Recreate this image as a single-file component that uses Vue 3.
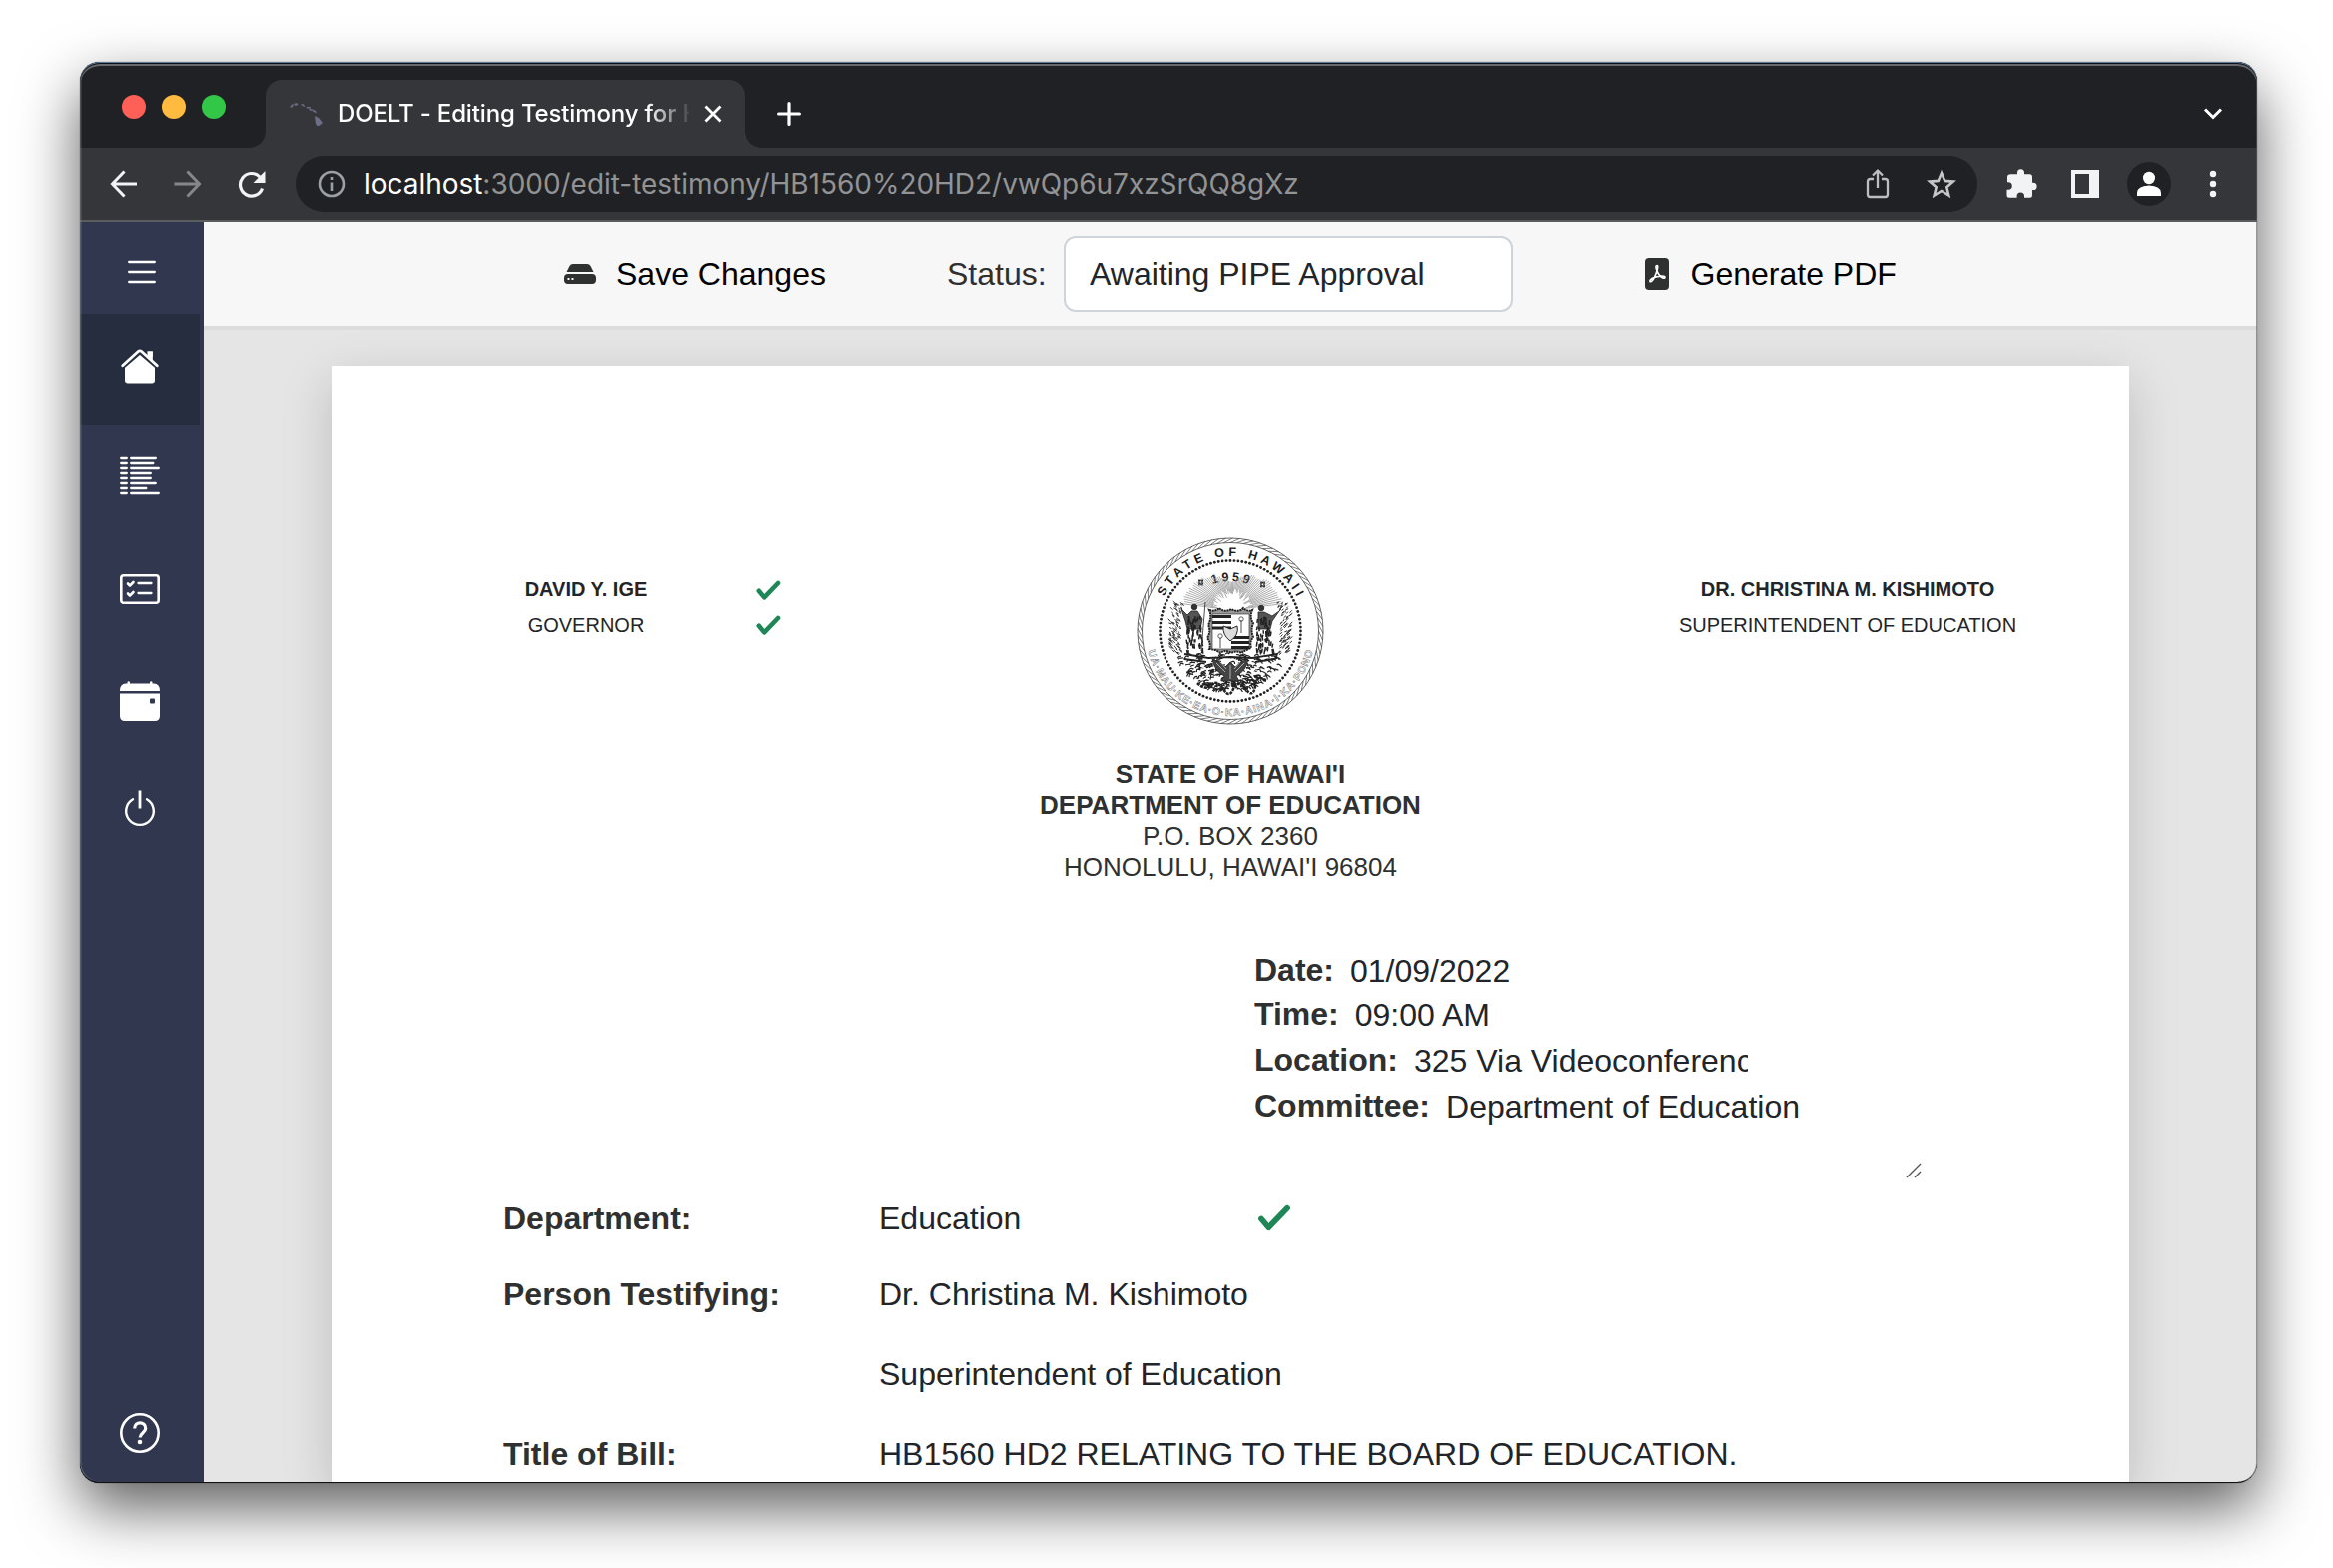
<script setup>
// Small deterministic generator so the engraved texture is always the same
let seed = 7
const rnd = () => {
  seed = (seed * 16807) % 2147483647
  return seed / 2147483647
}
const f = (n) => n.toFixed(1)

const beads = Array.from({ length: 112 }, (_, i) => {
  const a = (i / 112) * Math.PI * 2
  return { x: Math.cos(a) * 70.5, y: Math.sin(a) * 70.5 }
})

let rope = ''
for (let i = 0; i < 84; i++) {
  const a = (i / 84) * Math.PI * 2
  const b = a + 0.1
  rope += `M${f(Math.cos(a) * 88.6)} ${f(Math.sin(a) * 88.6)}L${f(Math.cos(b) * 93)} ${f(Math.sin(b) * 93)}`
}

let rays = ''
for (let i = 0; i < 60; i++) {
  const a = Math.PI * (1.04 + (i / 59) * 0.92)
  const r1 = 13 + rnd() * 9
  const r2 = 26 + Math.abs(Math.cos(a)) * 22 + rnd() * 4
  rays += `M${f(2 + Math.cos(a) * r1)} ${f(-21 + Math.sin(a) * r1)}L${f(2 + Math.cos(a) * r2)} ${f(-21 + Math.sin(a) * r2)}`
}

let leaves = ''
for (let i = 0; i < 210; i++) {
  const side = i % 2 ? 1 : -1
  const y = -28 + rnd() * 52
  const x = side * (49 + rnd() * 11 - Math.max(0, Math.abs(y) - 18) * 0.4)
  leaves += `M${f(x)} ${f(y)}l${f(side * (1 + rnd() * 2))} ${f(-1 - rnd() * 2)}`
}

let scroll = ''
for (let i = 0; i < 250; i++) {
  const y = 23 + rnd() * 36
  const half = Math.sqrt(62 * 62 - y * y) - 5
  const x = (rnd() * 2 - 1) * half
  const s = x < 0 ? -1 : 1
  scroll += `M${f(x)} ${f(y)}q${f(s * (1 + rnd() * 4))} ${f(-3 * rnd())} ${f(s * (3 + rnd() * 3))} ${f(3 * rnd())}`
}

let robes = ''
for (let i = 0; i < 120; i++) {
  const y = -16 + rnd() * 36
  const w = 6 + (y + 16) * 0.08
  const left = i % 2
  const x = (left ? -36 : 34 + y * 0.06) + (rnd() * 2 - 1) * w
  robes += `M${f(x)} ${f(y)}l${f(rnd() * 2 - 1)} ${f(3 + rnd() * 3)}`
}

const address = [
  { text: "STATE OF HAWAI'I", bold: true },
  { text: 'DEPARTMENT OF EDUCATION', bold: true },
  { text: 'P.O. BOX 2360' },
  { text: "HONOLULU, HAWAI'I 96804" },
]
const hearing = [
  { label: 'Date:', value: '01/09/2022', h: 44 },
  { label: 'Time:', value: '09:00 AM', h: 46 },
  { label: 'Location:', value: '325 Via Videoconference', h: 46, clip: true },
  { label: 'Committee:', value: 'Department of Education', h: 46 },
]
const codeRows = [37, 34.5, 40, 32, 32, 37, 27.5, 40]
</script>

<template>
  <div class="desktop">
    <div class="window">
      <header class="tabs">
        <div class="lights"><i class="red"></i><i class="amber"></i><i class="green"></i></div>
        <div class="tab">
          <svg class="fav" width="34" height="24" viewBox="0 0 34 24" fill="#6b6e86">
            <path d="M0 5l3-3 1 1-2 3zM4 2l3-1 1.500 2-3 1zM11 2l3 .5 1.500 2.500-3-1zM16.500 5l4.500 0 0 1.500-4 0zM19 7l2.500 0 1 2-2.500-.5zM22 7l4 2 1 2.500-4-2zM25 14l4 2 4 5-5 4-2-3z" />
          </svg>
          <span class="tab-title">DOELT - Editing Testimony for HB1560</span>
          <svg class="close" width="18" height="18" viewBox="0 0 18 18" stroke="#fff" stroke-width="2.800"><path d="M1.500 1.500l15 15M16.500 1.500l-15 15" /></svg>
        </div>
        <svg class="plus" width="24" height="24" viewBox="0 0 24 24" stroke="#fff" stroke-width="3.200" stroke-linecap="round"><path d="M12 1.600v20.800M1.600 12h20.800" /></svg>
        <svg class="chev" width="20" height="14" viewBox="0 0 20 14" fill="none" stroke="#fff" stroke-width="3"><path d="M2 2.500l8 8 8-8" /></svg>
      </header>

      <div class="toolbar">
        <svg class="nav" width="170" height="36" viewBox="0 0 170 36" fill="none" stroke-width="3">
          <g stroke="#f1f3f4"><path d="M27 18H3M14.500 5.500L2.500 18l12 12.500" /></g>
          <g stroke="#868789"><path d="M64.500 18H89M77.500 5.500L89.500 18l-12 12.500" /></g>
          <path stroke="#f1f3f4" stroke-width="3.200" d="M152.500 22.500a11.300 11.300 0 1 1-2.500-11.500" />
          <path fill="#f1f3f4" d="M155.500 5v12h-12z" />
        </svg>
        <div class="omnibox">
          <svg width="28" height="28" viewBox="0 0 28 28" fill="none" stroke="#9aa0a6" stroke-width="2.600"><circle cx="14" cy="14" r="12" /><path d="M14 12.500v8.500M14 7v3" /></svg>
          <span class="url"><b>localhost</b>:3000/edit-testimony/HB1560%20HD2/vwQp6u7xzSrQQ8gXz</span>
          <svg class="share" width="24" height="32" viewBox="0 0 24 32" fill="none" stroke="#bdbec0" stroke-width="2.300" stroke-linejoin="round"><path d="M8 11H4.500q-2.500 0-2.500 2.500v13q0 2.500 2.500 2.500h15q2.500 0 2.500-2.500v-13q0-2.500-2.500-2.500H16M12 20V3M7 7.500l5-5 5 5" /></svg>
          <svg class="star" width="30" height="30" viewBox="0 0 30 30" fill="none" stroke="#c5c6c8" stroke-width="2.600"><path d="M15 4l3.300 7.900 8.500.7-6.500 5.600 2 8.300L15 22l-7.300 4.500 2-8.300-6.500-5.600 8.500-.7z" /></svg>
        </div>
        <svg class="ext" width="230" height="48" viewBox="0 0 230 48" fill="#f1f3f4">
          <path d="M12 15h6.500v-1.500a3.500 3.500 0 0 1 7 0V15H31q2.500 0 2.500 2.500v6h1a3.600 3.600 0 0 1 0 7.200h-1V36q0 2.500-2.500 2.500h-5.500V37a3.700 3.700 0 0 0-7.400 0v1.500H10.500Q8 38.500 8 36v-5.500h1.500a3.700 3.700 0 0 0 0-7.500H8.500v-5.500Q8.500 15 12 15z" transform="translate(-.5 -.7)" />
          <path fill-rule="evenodd" d="M72 10h28v28H72zM76 14h14v20H76z" />
          <circle cx="150" cy="24" r="22" fill="#202124" />
          <ellipse cx="150" cy="18" rx="6" ry="6.200" fill="#fff" /><path fill="#fff" d="M138 36v-3q0-7 12-7.500 12 .5 12 7.500v3z" />
          <circle cx="214" cy="14" r="3.200" /><circle cx="214" cy="24" r="3.200" /><circle cx="214" cy="34" r="3.200" />
        </svg>
      </div>

      <div class="body">
        <nav class="side">
          <div class="burger">
            <svg width="28" height="24" viewBox="0 0 28 24" stroke="#fff" stroke-width="2.300" stroke-linecap="round"><path d="M1.200 2h25.600M1.200 12h25.600M1.200 22h25.600" /></svg>
          </div>
          <div class="item active">
            <svg width="40" height="40" viewBox="0 0 40 40" fill="#fff">
              <path d="M27.500 5.500h5.300v11l-5.300-5z" />
              <path d="M5 20L20 8l15 12V34.500q0 3-3 3H8q-3 0-3-3z" />
              <path d="M2 20L18.300 6q1.700-1.300 3.400 0L38 20" fill="none" stroke="#252d3f" stroke-width="6.800" />
              <path d="M27.500 5.500h5.300v9l-5.300-5z" />
              <path d="M2.700 19.800L18.300 5.500q1.700-1.300 3.400 0L37.300 19.800" fill="none" stroke="#fff" stroke-width="2.800" stroke-linecap="round" />
            </svg>
          </div>
          <div class="item">
            <svg width="40" height="40" viewBox="0 0 40 40" stroke="#fff" stroke-width="2.300" stroke-linecap="round">
              <path v-for="(w, i) in codeRows" :key="i" :d="`M1.200 ${2 + i * 5}h5.600M11.200 ${2 + i * 5}H${w - 1.200}`" />
            </svg>
          </div>
          <div class="item">
            <svg width="40" height="40" viewBox="0 0 40 40" fill="none" stroke="#fff" stroke-width="2.600" stroke-linecap="round" stroke-linejoin="round">
              <rect x="1.300" y="6.300" width="37.400" height="27.400" rx="2.500" />
              <path d="M18.500 14h13M18.500 24h13" stroke-width="2.300" /><path d="M8 14.500l2 2 3.500-3.500M8 24.500l2 2 3.500-3.500" />
            </svg>
          </div>
          <div class="item">
            <svg width="40" height="40" viewBox="0 0 40 40" fill="#fff">
              <path d="M0 10Q0 2.500 6 2.500h1.500V1Q8.700-.5 10 1v1.500h20V1q1.200-1.500 2.500 0v1.500H34q6 0 6 7.500zM0 12.500h40V35q0 5-5 5H5q-5 0-5-5z" />
              <rect x="30" y="17.500" width="5" height="5" rx="1" fill="#30374f" />
            </svg>
          </div>
          <div class="item">
            <svg width="40" height="40" viewBox="0 0 40 40" fill="none" stroke="#fff" stroke-width="2.400" stroke-linecap="round"><path d="M20 2.500V20.500" stroke-width="2.800" stroke-linecap="butt" /><path d="M13 11.200a13.800 13.800 0 1 0 14 0" /></svg>
          </div>
          <div class="help">
            <svg width="40" height="40" viewBox="0 0 40 40" fill="none" stroke="#fff" stroke-width="2.600"><circle cx="20" cy="20" r="18.700" /><path d="M14.700 15.500c0-7.500 11-7.500 11 0 0 4-5.500 4.500-5.500 9" stroke-width="3.200" /><circle cx="20" cy="29" r="2.300" fill="#fff" stroke="none" /></svg>
          </div>
        </nav>

        <main class="main">
          <div class="actions">
            <div class="action save">
              <svg width="32" height="20" viewBox="0 0 32 20" fill="#2f3030"><path d="M5.500 2Q6.500 0 9 0h14q2.500 0 3.500 2l3 6h-27z" /><path fill-rule="evenodd" d="M4 10h24q4 0 4 4v2q0 4-4 4H4q-4 0-4-4v-2q0-4 4-4zM3.500 14v2h2v-2zM7.500 14v2h2v-2z" /></svg>
              <span>Save Changes</span>
            </div>
            <span class="status">Status:</span>
            <div class="select">Awaiting PIPE Approval</div>
            <div class="action pdf">
              <svg width="24" height="32" viewBox="0 0 24 32"><rect width="24" height="32" rx="4" fill="#2f3030" /><path d="M12 7.500c-2.500 0 0 6 1.500 8.500 2 3.500 6 5.500 6.500 3.500.500-2-8-2-13 1-3.500 2.500-2 4.500 0 2.500 3-3 7.500-15.500 5-15.500z" fill="none" stroke="#fff" stroke-width="1.600" /></svg>
              <span>Generate PDF</span>
            </div>
          </div>

          <article class="paper">
            <section class="head">
              <div class="official gov"><b>DAVID Y. IGE</b><span>GOVERNOR</span></div>
              <div class="checks">
                <svg v-for="n in 2" :key="n" width="25" height="21" viewBox="0 0 25 21" fill="none" stroke="#1f8656" stroke-width="4.600" stroke-linecap="round" stroke-linejoin="round"><path d="M2.800 10.800l5.400 6.600L22 3" /></svg>
              </div>
              <svg class="seal" width="188" height="188" viewBox="-94 -94 188 188" fill="none" stroke="#222">
                <defs>
                  <path id="arc-name" d="M-75 0A75 75 0 0 1 75 0" />
                  <path id="arc-year" d="M-50 0A50 50 0 0 1 50 0" />
                  <path id="arc-motto" d="M-85 0A85 85 0 0 0 85 0" />
                </defs>
                <circle r="93" stroke-width=".7" /><circle r="88.500" stroke-width=".7" />
                <path :d="rope" stroke-width=".7" stroke="#444" />
                <circle v-for="(b, i) in beads" :key="i" :cx="b.x" :cy="b.y" r="1.400" fill="#222" stroke="none" />
                <g font-family="Liberation Sans, Arial, sans-serif" text-anchor="middle">
                  <text font-size="12.500" font-weight="700" fill="#1c1c1c" stroke="none" textLength="164"><textPath href="#arc-name" startOffset="50%" textLength="164">STATE OF HAWAII</textPath></text>
                  <text font-size="12.500" font-weight="700" fill="#1c1c1c" stroke="none" letter-spacing="3"><textPath href="#arc-year" startOffset="51%">1959</textPath></text>
                  <text font-size="10.500" font-weight="700" fill="none" stroke="#777" stroke-width=".5" textLength="226"><textPath href="#arc-motto" startOffset="50%" textLength="226">UA·MAU·KE·EA·O·KA·AINA·I·KA·PONO</textPath></text>
                </g>
                <path d="M-32-50.500h5M-32-47h5M30-48.500h5M30-45h5M-31-51.500v6M-28-51.500v6M31-49.500v6M34-49.500v6" stroke-width="1.400" />
                <path :d="rays" stroke="#888" stroke-width=".7" />
                <path :d="leaves" stroke="#333" stroke-width="1" />
                <path :d="scroll" stroke="#222" stroke-width="1.200" />
                <!-- supporters -->
                <g fill="#333" stroke="#222" stroke-width=".8">
                  <circle cx="-36" cy="-24" r="2.800" />
                  <path d="M-39-20h6l5 8-2 10-13 0-2-8-4-12 6 6z" fill="#555" />
                  <circle cx="31" cy="-23" r="2.800" />
                  <path d="M28-19h6l8 4 7-5-7 10-2 8H28z" fill="#555" />
                  <path d="M-25-29L-29 20" fill="none" />
                </g>
                <path :d="robes" stroke="#222" stroke-width="1.500" />
                <!-- phoenix and ribbon -->
                <path d="M-46 23l24 4 22-1 22 1 25-4-2 5-20 3M-46 28l22 3" stroke-width="1.800" />
                <path d="M-18 28q8 2 13 8l5-5 5 5q5-6 13-8-2 12-12 17l3 5h-18l3-5q-10-5-12-17z" fill="#444" stroke="#222" stroke-width=".8" />
                <path d="M-14 32l9 9M14 32l-9 9M-10 31l6 7M10 31l-6 7M0 34v14" stroke="#ccc" stroke-width=".8" />
                <path d="M-30 35q8 2 8 8t-8 6M30 35q-8 2-8 8t8 6" stroke="#fff" stroke-width="1.600" />
                <!-- shield -->
                <path d="M-21-21q6 2 10-2 5 5 12 1 7 4 12-1 4 4 9 2-3 8 1 13-3 7 0 14-4 5-2 11-6 2-10 5-5-3-10 0-6-4-11 0-5-4-11-4 2-6-2-11 4-7 1-13 4-8 1-15z" fill="#999" stroke="#222" stroke-width="2" stroke-dasharray="2 .7" />
                <path d="M-18-17H19V18H-18z" fill="#fff" stroke-width=".6" />
                <path d="M-18-14.500H1M-18-8.500H1M-18-3H1M1 6.500H19M1 11.500H19M1 16.500H19" stroke-width="3" />
                <path d="M11-11V2M-10 7v10" stroke-width=".8" /><circle cx="11" cy="-12" r="2.200" stroke-width=".7" /><circle cx="-10" cy="5" r="2.200" stroke-width=".7" />
                <path d="M-7-5L0-2l7-3q2 9-7 15-8-6-7-15z" fill="#ddd" stroke-width="1" />
                <path d="M-33 52q8 8 14 2t12 4 10 0 12 0 10-3 10-5" stroke-width="2.500" stroke-dasharray="3 1" />
              </svg>
              <div class="official sup"><b>DR. CHRISTINA M. KISHIMOTO</b><span>SUPERINTENDENT OF EDUCATION</span></div>
            </section>

            <section class="address">
              <div v-for="a in address" :key="a.text" :class="{ bold: a.bold }">{{ a.text }}</div>
            </section>

            <section class="hearing">
              <div v-for="h in hearing" :key="h.label" class="hrow" :style="{ height: h.h + 'px' }">
                <b>{{ h.label }}</b><span :class="{ clip: h.clip }">{{ h.value }}</span>
              </div>
              <svg class="grip" width="16" height="16" viewBox="0 0 16 16" stroke="#555" stroke-width="1.400"><path d="M1 15L15 1M9 15l6-6" /></svg>
            </section>

            <section class="fields">
              <div class="field dept"><b>Department:</b><span>Education</span>
                <svg width="34" height="28" viewBox="0 0 34 28" fill="none" stroke="#1f8656" stroke-width="5.800" stroke-linecap="round" stroke-linejoin="round"><path d="M4 14.500l7.300 8.700L30 3.800" /></svg>
              </div>
              <div class="field"><b>Person Testifying:</b><span>Dr. Christina M. Kishimoto</span></div>
              <div class="field"><b></b><span>Superintendent of Education</span></div>
              <div class="field"><b>Title of Bill:</b><span>HB1560 HD2 RELATING TO THE BOARD OF EDUCATION.</span></div>
            </section>
          </article>
        </main>
      </div>
    </div>
  </div>
</template>

<style>
body { margin: 0; background: #fff; }
</style>

<style scoped>
* { box-sizing: border-box; }
svg { display: block; flex: none; }
.desktop {
  position: relative; width: 2336px; height: 1570px; overflow: hidden; background: #fff;
  padding: 62px 76px 86px 80px;
  font-family: "Liberation Sans", Arial, sans-serif;
}
.window {
  position: relative; width: 2180px; height: 1423px; padding-top: 4px;
  border-radius: 20px; background: #202124;
  display: flex; flex-direction: column;
  box-shadow: 0 25px 60px rgba(0, 0, 0, .64), 0 0 1px rgba(0, 0, 0, .8);
}
.window::after {
  content: ""; position: absolute; inset: 0; border-radius: 20px; pointer-events: none;
  border-bottom: 1px solid #111;
  box-shadow: inset 0 1px 0 #5c7893, inset 0 2px 0 #0c0f18, inset 0 4px 0 #69696c, inset 1.500px 0 0 rgba(150, 150, 155, .4), inset -1px 0 0 rgba(90, 90, 95, .6);
}
.tabs { height: 82px; display: flex; align-items: flex-start; flex: none; }
.lights { display: flex; gap: 16px; margin: 29px 0 0 42px; width: 144px; }
.lights i { width: 24px; height: 24px; border-radius: 50%; }
.red { background: #fe5f57; } .amber { background: #febb40; } .green { background: #33c748; }
.tab {
  position: relative; width: 480px; height: 68px; margin-top: 14px; background: #35363a;
  border-radius: 16px 16px 0 0; display: flex; align-items: center; padding-left: 24px;
}
.tab::before, .tab::after { content: ""; position: absolute; bottom: 0; width: 16px; height: 16px; }
.tab::before { left: -16px; background: radial-gradient(circle at 0 0, transparent 15.500px, #35363a 16px); }
.tab::after { right: -16px; background: radial-gradient(circle at 100% 0, transparent 15.500px, #35363a 16px); }
.tab-title {
  font: 500 24px/32px Inter, sans-serif; color: #fff; margin-left: 14px; width: 352px; overflow: hidden; white-space: nowrap;
  letter-spacing: -.15px;
  -webkit-mask-image: linear-gradient(90deg, #000 310px, transparent 356px); mask-image: linear-gradient(90deg, #000 310px, transparent 356px);
}
.close { margin-left: 15px; }
.plus { margin: 36px 0 0 32px; }
.chev { margin: 41px 34px 0 auto; }
.toolbar { height: 74px; flex: none; background: #35363a; border-bottom: 2px solid #5b5c60; display: flex; align-items: center; }
.nav { margin-left: 30px; width: 170px; }
.omnibox { width: 1684px; height: 56px; margin-left: 16px; border-radius: 28px; background: #202124; display: flex; align-items: center; padding-left: 22px; }
.url { font: 400 28px/40px Inter, sans-serif; color: #929395; margin-left: 18px; white-space: nowrap; width: 1000px; letter-spacing: -.03px; }
.url b { color: #fff; font-weight: 400; }
.share { margin-left: 504px; }
.star { margin-left: 37px; }
.ext { margin-left: 22px; }
.body { flex: 1; min-height: 0; display: flex; border-radius: 0 0 19px 19px; overflow: hidden; }
.side { width: 124px; background: #30374f; display: flex; flex-direction: column; flex: none; }
.burger { height: 92px; padding: 38px 0 0 48px; }
.item { height: 112px; padding: 32px 0 0 40px; width: 120px; }
.active { background: #252d3f; }
.item:nth-child(3) { padding-top: 31px; }
.item:nth-child(6) { padding-top: 27px; }
.help { margin: auto 0 30px 40px; }
.main { flex: 1; background: #e5e5e5; display: flex; flex-direction: column; min-width: 0; color: #212529; }
.actions {
  height: 108px; flex: none; background: #f7f7f7; border-bottom: 4px solid #dcdcdc; display: flex; align-items: center;
  font-size: 32px; line-height: 40px; padding-left: 361px; color: #000; white-space: nowrap;
}
.action { display: flex; align-items: center; gap: 20px; }
.save { width: 383px; }
.status { color: #2f3030; width: 117px; }
.select { width: 450px; height: 76px; border: 2px solid #ced4da; border-radius: 12px; background: #fff; color: #212529; padding: 16px 0 0 24px; }
.pdf { margin-left: 132px; gap: 21.500px; }
.paper {
  width: 1800px; flex: 1; margin: 36px 0 0 128px; background: #fff; min-height: 0;
  box-shadow: 0 16px 48px rgba(0, 0, 0, .175); display: flex; flex-direction: column;
}
.head { height: 395px; flex: none; display: flex; align-items: flex-start; }
.official { display: flex; flex-direction: column; align-items: center; font-size: 20px; line-height: 36px; margin-top: 206px; white-space: nowrap; }
.gov { width: 136px; margin-left: 187px; }
.sup { width: 350px; margin-left: 349px; }
.checks { display: flex; flex-direction: column; gap: 14px; margin: 215px 0 0 102px; width: 25px; }
.seal { margin: 172px 0 0 356px; }
.address { flex: none; text-align: center; font-size: 26px; line-height: 31px; color: #2f3030; height: 184px; margin-top: -1px; }
.bold { font-weight: 700; }
.hearing { position: relative; margin-left: 924px; height: 248px; flex: none; font-size: 32px; padding-top: 5px; }
.hrow { display: flex; line-height: 44px; white-space: nowrap; gap: 16px; }
.hrow b { color: #2f3030; }
.hrow span { position: relative; top: 1px; }
.clip { width: 334.500px; overflow: hidden; }
.grip { position: absolute; left: 652px; top: 220px; }
.fields { font-size: 32px; line-height: 40px; margin-left: 172px; padding-top: 8px; flex: none; }
.field { display: flex; height: 80px; white-space: nowrap; }
.field b { width: 376px; color: #2f3030; flex: none; }
.dept { height: 76px; }
.dept span { width: 379px; }
.dept svg { margin-top: 6px; }
</style>
